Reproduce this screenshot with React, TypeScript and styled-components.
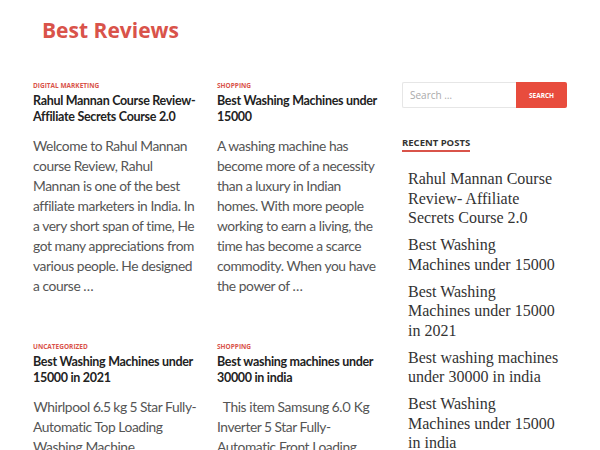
import React from 'react';
import styled, { createGlobalStyle } from 'styled-components';

const GlobalStyle = createGlobalStyle`
  body {
    margin: 0;
    background: #fff;
    font-family: 'Lato', 'Noto Sans', sans-serif;
  }
`;

const Page = styled.div`
  width: 600px;
  padding: 0 33px;
  box-sizing: border-box;
`;

const Header = styled.header`
  padding: 15px 0 0 9px;
  height: 81px;
  box-sizing: border-box;
`;

const SiteTitle = styled.h1`
  margin: 0;
  font-family: 'Open Sans', sans-serif;
  font-size: 21px;
  line-height: 30px;
  font-weight: 700;
  color: #d9534a;
`;

const Layout = styled.div`
  display: grid;
  grid-template-columns: 348px 165px;
  column-gap: 21px;
`;

const PostGrid = styled.div`
  display: grid;
  grid-template-columns: 164px 164px;
  column-gap: 20px;
  row-gap: 46px;
`;

const Post = styled.article`
  display: flex;
  flex-direction: column;
`;

const Category = styled.span`
  font-family: 'Open Sans', sans-serif;
  font-size: 6.5px;
  font-weight: 700;
  color: #d9534a;
  text-transform: uppercase;
  line-height: 10px;
`;

const PostTitle = styled.h2`
  margin: 2px 0 0;
  font-size: 12.5px;
  letter-spacing: -0.3px;
  line-height: 16px;
  font-weight: 700;
  color: #222;
`;

const Excerpt = styled.p`
  margin: 11px 0 0;
  font-size: 13.8px;
  letter-spacing: -0.42px;
  font-variant-numeric: proportional-nums;
  line-height: 20px;
  color: #555;
`;

const Sidebar = styled.aside`
  display: flex;
  flex-direction: column;
`;

const SearchForm = styled.form`
  display: flex;
  height: 26px;
  margin-top: 1px;
`;

const SearchInput = styled.input`
  width: 114px;
  box-sizing: border-box;
  border: 1px solid #e6e6e6;
  border-right: none;
  border-radius: 2px 0 0 2px;
  padding: 0 7px;
  font-family: 'Open Sans', sans-serif;
  font-size: 10px;
  color: #555;
  outline: none;
  &::placeholder {
    color: #aaa;
  }
`;

const SearchButton = styled.button`
  width: 51px;
  border: none;
  border-radius: 0 2px 2px 0;
  background: #e84c3d;
  color: #fff;
  font-family: 'Open Sans', sans-serif;
  font-size: 6.5px;
  font-weight: 700;
  text-transform: uppercase;
  padding: 0;
`;

const WidgetTitle = styled.h3`
  margin: 29px 0 0;
  align-self: flex-start;
  font-family: 'Open Sans', sans-serif;
  font-size: 9.5px;
  font-weight: 700;
  color: #333;
  text-transform: uppercase;
  line-height: 12px;
  padding-bottom: 1px;
  border-bottom: 2px solid #d9534a;
`;

const RecentList = styled.ul`
  list-style: none;
  margin: 17px 0 0;
  padding: 0 0 0 6px;
  display: flex;
  flex-direction: column;
  gap: 7px;
`;

const RecentItem = styled.li`
  max-width: 152px;
  font-family: 'Liberation Serif', 'Times New Roman', serif;
  font-size: 16px;
  line-height: 19.7px;
  color: #333;
`;

const posts = [
  {
    category: 'Digital Marketing',
    title: 'Rahul Mannan Course Review- Affiliate Secrets Course 2.0',
    excerpt:
      'Welcome to Rahul Mannan course Review, Rahul Mannan is one of the best affiliate marketers in India. In a very short span of time, He got many appreciations from various people. He designed a course …',
  },
  {
    category: 'Shopping',
    title: 'Best Washing Machines under 15000',
    excerpt:
      'A washing machine has become more of a necessity than a luxury in Indian homes. With more people working to earn a living, the time has become a scarce commodity. When you have the power of …',
  },
  {
    category: 'Uncategorized',
    title: 'Best Washing Machines under 15000 in 2021',
    excerpt: '\u200aWhirlpool 6.5 kg 5 Star Fully-Automatic Top Loading Washing Machine',
  },
  {
    category: 'Shopping',
    title: 'Best washing machines under 30000 in india',
    excerpt: '\u00a0 This item Samsung 6.0 Kg Inverter 5 Star Fully-Automatic Front Loading Washing Machine',
  },
];

const recent = [
  'Rahul Mannan Course Review- Affiliate Secrets Course 2.0',
  'Best Washing Machines under 15000',
  'Best Washing Machines under 15000 in 2021',
  'Best washing machines under 30000 in india',
  'Best Washing Machines under 15000 in india',
];

const App: React.FC = () => {
  return (
    <Page>
      <GlobalStyle />
      <Header>
        <SiteTitle>Best Reviews</SiteTitle>
      </Header>
      <Layout>
        <PostGrid>
          {posts.map((p) => (
            <Post key={p.title}>
              <Category>{p.category}</Category>
              <PostTitle>{p.title}</PostTitle>
              <Excerpt>{p.excerpt}</Excerpt>
            </Post>
          ))}
        </PostGrid>
        <Sidebar>
          <SearchForm onSubmit={(e) => e.preventDefault()}>
            <SearchInput type="search" placeholder="Search …" />
            <SearchButton type="submit">Search</SearchButton>
          </SearchForm>
          <WidgetTitle>Recent Posts</WidgetTitle>
          <RecentList>
            {recent.map((r) => (
              <RecentItem key={r}>{r}</RecentItem>
            ))}
          </RecentList>
        </Sidebar>
      </Layout>
    </Page>
  );
};

export default App;
